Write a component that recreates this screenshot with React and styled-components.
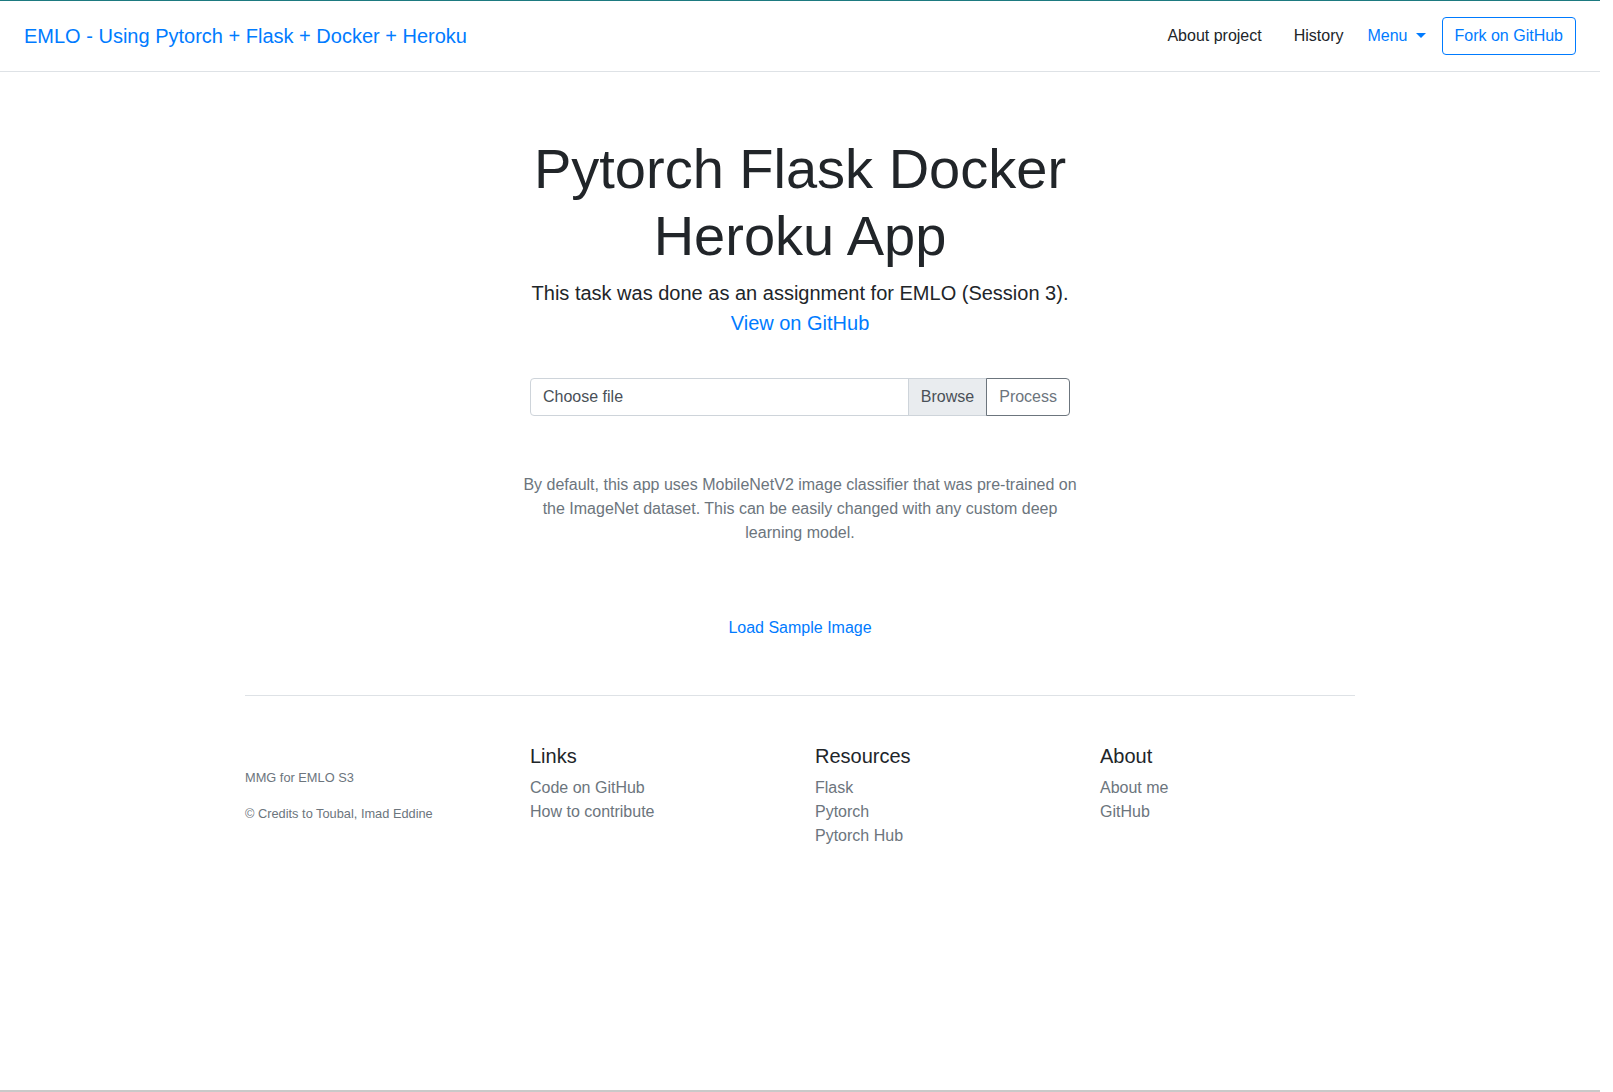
import React from "react";
import styled, { createGlobalStyle } from "styled-components";

const GlobalStyle = createGlobalStyle`
  html, body {
    margin: 0;
    padding: 0;
    background: #fff;
  }
  body {
    font-family: "Liberation Sans", Arial, sans-serif;
    font-size: 16px;
    line-height: 1.5;
    color: #212529;
  }
  * {
    box-sizing: border-box;
  }
`;

const Page = styled.div`
  width: calc(100% - 13px);
  min-height: 1092px;
  border-top: 1px solid #1d7a80;
  border-bottom: 2px solid #c9c9c9;
  display: flex;
  flex-direction: column;
`;

const Navbar = styled.nav`
  display: flex;
  align-items: center;
  justify-content: space-between;
  padding: 16px 24px;
  border-bottom: 1px solid #dee2e6;
`;

const Brand = styled.a`
  color: #007bff;
  font-size: 20px;
  line-height: 30px;
  text-decoration: none;
`;

const NavLinks = styled.div`
  display: flex;
  align-items: center;
`;

const NavLink = styled.a`
  color: ${(p) => (p.$active ? "#007bff" : "#212529")};
  font-size: 16px;
  text-decoration: none;
  margin-right: ${(p) => p.$gap || 0}px;
  display: inline-flex;
  align-items: center;
`;

const Caret = styled.span`
  display: inline-block;
  margin-left: 8px;
  margin-top: -2px;
  border-top: 5px solid #007bff;
  border-left: 5px solid transparent;
  border-right: 5px solid transparent;
`;

const OutlineButton = styled.a`
  display: inline-block;
  color: #007bff;
  border: 1px solid #007bff;
  border-radius: 4px;
  padding: 6px 12px;
  font-size: 16px;
  line-height: 24px;
  text-decoration: none;
`;

const Container = styled.div`
  width: 1140px;
  margin: 0 auto;
  padding: 0 15px;
`;

const Hero = styled.section`
  width: 540px;
  margin: 0 auto;
  padding-top: 63px;
  text-align: center;
`;

const Title = styled.h1`
  font-size: 56px;
  font-weight: 400;
  line-height: 1.2;
  margin: 0 0 9px;
  color: #212529;
`;

const Lead = styled.p`
  font-size: 20px;
  line-height: 30px;
  margin: 0;
  color: #212529;
`;

const Link = styled.a`
  color: #007bff;
  text-decoration: none;
`;

const InputGroup = styled.div`
  display: flex;
  height: 38px;
  margin-top: 40px;
  text-align: left;
`;

const FileField = styled.div`
  flex: 1;
  display: flex;
  border: 1px solid #ced4da;
  border-radius: 4px 0 0 4px;
  overflow: hidden;
`;

const FileLabel = styled.span`
  flex: 1;
  padding: 6px 12px;
  color: #495057;
  line-height: 24px;
`;

const BrowseLabel = styled.span`
  padding: 6px 12px;
  background: #e9ecef;
  border-left: 1px solid #ced4da;
  color: #495057;
  line-height: 24px;
`;

const SecondaryButton = styled.button`
  font-family: inherit;
  font-size: 16px;
  line-height: 24px;
  padding: 6px 12px;
  background: #fff;
  color: #6c757d;
  border: 1px solid #6c757d;
  border-radius: 0 4px 4px 0;
  margin-left: -1px;
`;

const Description = styled.p`
  width: 570px;
  margin: 57px auto 0;
  text-align: center;
  color: #6c757d;
  font-size: 16px;
  line-height: 24px;
`;

const SampleRow = styled.div`
  text-align: center;
  margin-top: 71px;
  line-height: 24px;
`;

const Footer = styled.footer`
  margin-top: 55px;
  padding-top: 48px;
  border-top: 1px solid #dee2e6;
`;

const FooterGrid = styled.div`
  display: grid;
  grid-template-columns: repeat(4, 1fr);
  margin: 0 -15px;
`;

const FooterCol = styled.div`
  padding: 0 15px;
  padding-top: ${(p) => (p.$offset ? 24 : 0)}px;
`;

const Small = styled.small`
  display: block;
  font-size: 12.8px;
  line-height: 19.2px;
  color: #6c757d;
  margin-bottom: 16px;
`;

const FooterHeading = styled.h5`
  font-size: 20px;
  font-weight: 400;
  line-height: 24px;
  margin: 0 0 8px;
  color: #212529;
`;

const FooterList = styled.ul`
  list-style: none;
  padding: 0;
  margin: 0;
`;

const FooterLink = styled.a`
  color: #6c757d;
  text-decoration: none;
  line-height: 24px;
`;

const columns = [
  { title: "Links", items: ["Code on GitHub", "How to contribute"] },
  { title: "Resources", items: ["Flask", "Pytorch", "Pytorch Hub"] },
  { title: "About", items: ["About me", "GitHub"] },
];

export default function App() {
  return (
    <>
      <GlobalStyle />
      <Page>
        <Navbar>
          <Brand href="#">EMLO - Using Pytorch + Flask + Docker + Heroku</Brand>
          <NavLinks>
            <NavLink href="#" $gap={32}>About project</NavLink>
            <NavLink href="#" $gap={24}>History</NavLink>
            <NavLink href="#" $active $gap={16}>
              Menu
              <Caret />
            </NavLink>
            <OutlineButton href="#">Fork on GitHub</OutlineButton>
          </NavLinks>
        </Navbar>

        <Container>
          <Hero>
            <Title>Pytorch Flask Docker Heroku App</Title>
            <Lead>This task was done as an assignment for EMLO (Session 3).</Lead>
            <Lead>
              <Link href="#">View on GitHub</Link>
            </Lead>
            <InputGroup>
              <FileField>
                <FileLabel>Choose file</FileLabel>
                <BrowseLabel>Browse</BrowseLabel>
              </FileField>
              <SecondaryButton>Process</SecondaryButton>
            </InputGroup>
          </Hero>

          <Description>
            By default, this app uses MobileNetV2 image classifier that was
            pre-trained on the ImageNet dataset. This can be easily changed with
            any custom deep learning model.
          </Description>

          <SampleRow>
            <Link href="#">Load Sample Image</Link>
          </SampleRow>

          <Footer>
            <FooterGrid>
              <FooterCol $offset>
                <Small>MMG for EMLO S3</Small>
                <Small>© Credits to Toubal, Imad Eddine</Small>
              </FooterCol>
              {columns.map((col) => (
                <FooterCol key={col.title}>
                  <FooterHeading>{col.title}</FooterHeading>
                  <FooterList>
                    {col.items.map((item) => (
                      <li key={item}>
                        <FooterLink href="#">{item}</FooterLink>
                      </li>
                    ))}
                  </FooterList>
                </FooterCol>
              ))}
            </FooterGrid>
          </Footer>
        </Container>
      </Page>
    </>
  );
}
